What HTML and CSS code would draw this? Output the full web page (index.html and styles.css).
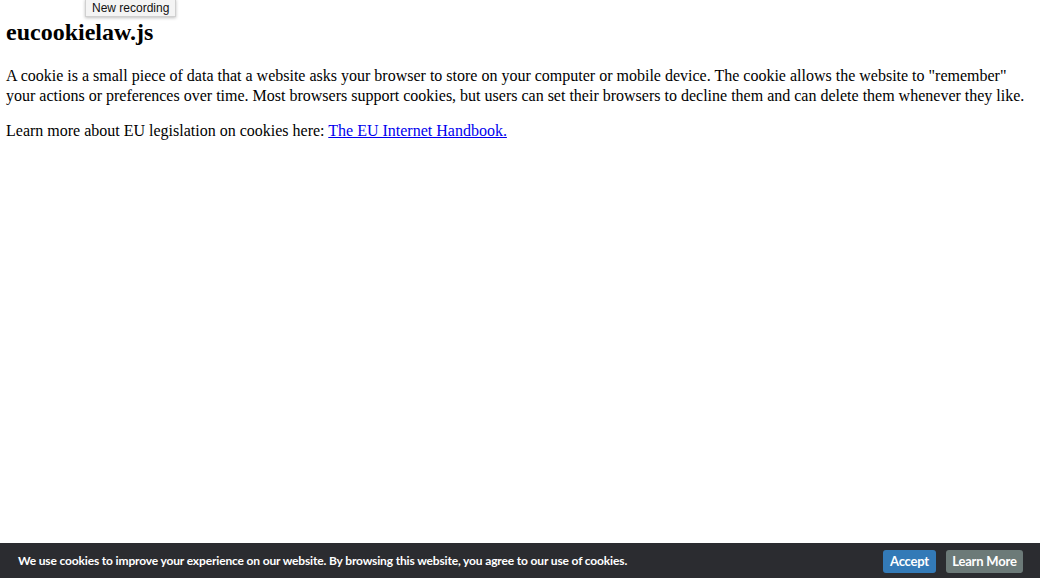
FILE: index.html
```html
<!DOCTYPE html>
<html>
<head>
<meta charset="utf-8">
<title>eucookielaw.js</title>
<link rel="stylesheet" href="styles.css">
</head>
<body>
<div class="tooltip">New recording</div>
<h1 class="title">eucookielaw.js</h1>
<p class="text">A cookie is a small piece of data that a website asks your browser to store on your computer or mobile device. The cookie allows the website to "remember" your actions or preferences over time. Most browsers support cookies, but users can set their browsers to decline them and can delete them whenever they like.</p>
<p class="text">Learn more about EU legislation on cookies here: <a class="link" href="#">The EU Internet Handbook.</a></p>
<div class="banner">
  <span class="banner-text">We use cookies to improve your experience on our website. By browsing this website, you agree to our use of cookies.</span>
  <div class="banner-actions">
    <a class="btn btn-accept" href="#">Accept</a>
    <a class="btn btn-more" href="#">Learn More</a>
  </div>
</div>
</body>
</html>
```
FILE: styles.css
```css
html, body {
  margin: 0;
  padding: 0;
}
body {
  padding: 6px;
  font-family: "Liberation Serif", "Times New Roman", serif;
  font-size: 16px;
  color: #000;
  background: #fff;
  height: 578px;
  box-sizing: border-box;
  position: relative;
}
.title {
  font-size: 24px;
  font-weight: bold;
  margin: 12px 0 20px;
  line-height: 28px;
}
.text {
  margin: 0 0 15px;
  line-height: 20px;
}
.link {
  color: #0000ee;
  text-decoration: underline;
}
.tooltip {
  position: absolute;
  left: 85px;
  top: -1px;
  height: 16px;
  padding: 0 6px;
  font-family: "Liberation Sans", Arial, sans-serif;
  font-size: 12px;
  line-height: 16px;
  color: #111;
  background: #f4f4f4;
  border: 1px solid #d0d0d0;
  box-shadow: 0 1px 3px rgba(0,0,0,0.25);
  white-space: nowrap;
}
.banner {
  position: fixed;
  left: 0;
  right: 0;
  bottom: 0;
  height: 35px;
  background: #2b2c30;
  display: flex;
  align-items: center;
  justify-content: space-between;
  padding: 0 17px 0 18px;
  box-sizing: border-box;
  font-family: Lato, "Open Sans", sans-serif;
  font-weight: bold;
  font-size: 12px;
  color: #fff;
}
.banner-text {
  letter-spacing: -0.15px;
  white-space: nowrap;
}
.banner-actions {
  display: flex;
  gap: 10px;
  padding-top: 1px;
}
.btn {
  display: block;
  height: 23px;
  line-height: 23px;
  border-radius: 3px;
  color: #fff;
  text-decoration: none;
  font-size: 13px;
  letter-spacing: -0.2px;
  text-align: center;
  white-space: nowrap;
}
.btn-accept {
  background: #337ab7;
  width: 53px;
}
.btn-more {
  background: #6c7a78;
  width: 77px;
}
```
